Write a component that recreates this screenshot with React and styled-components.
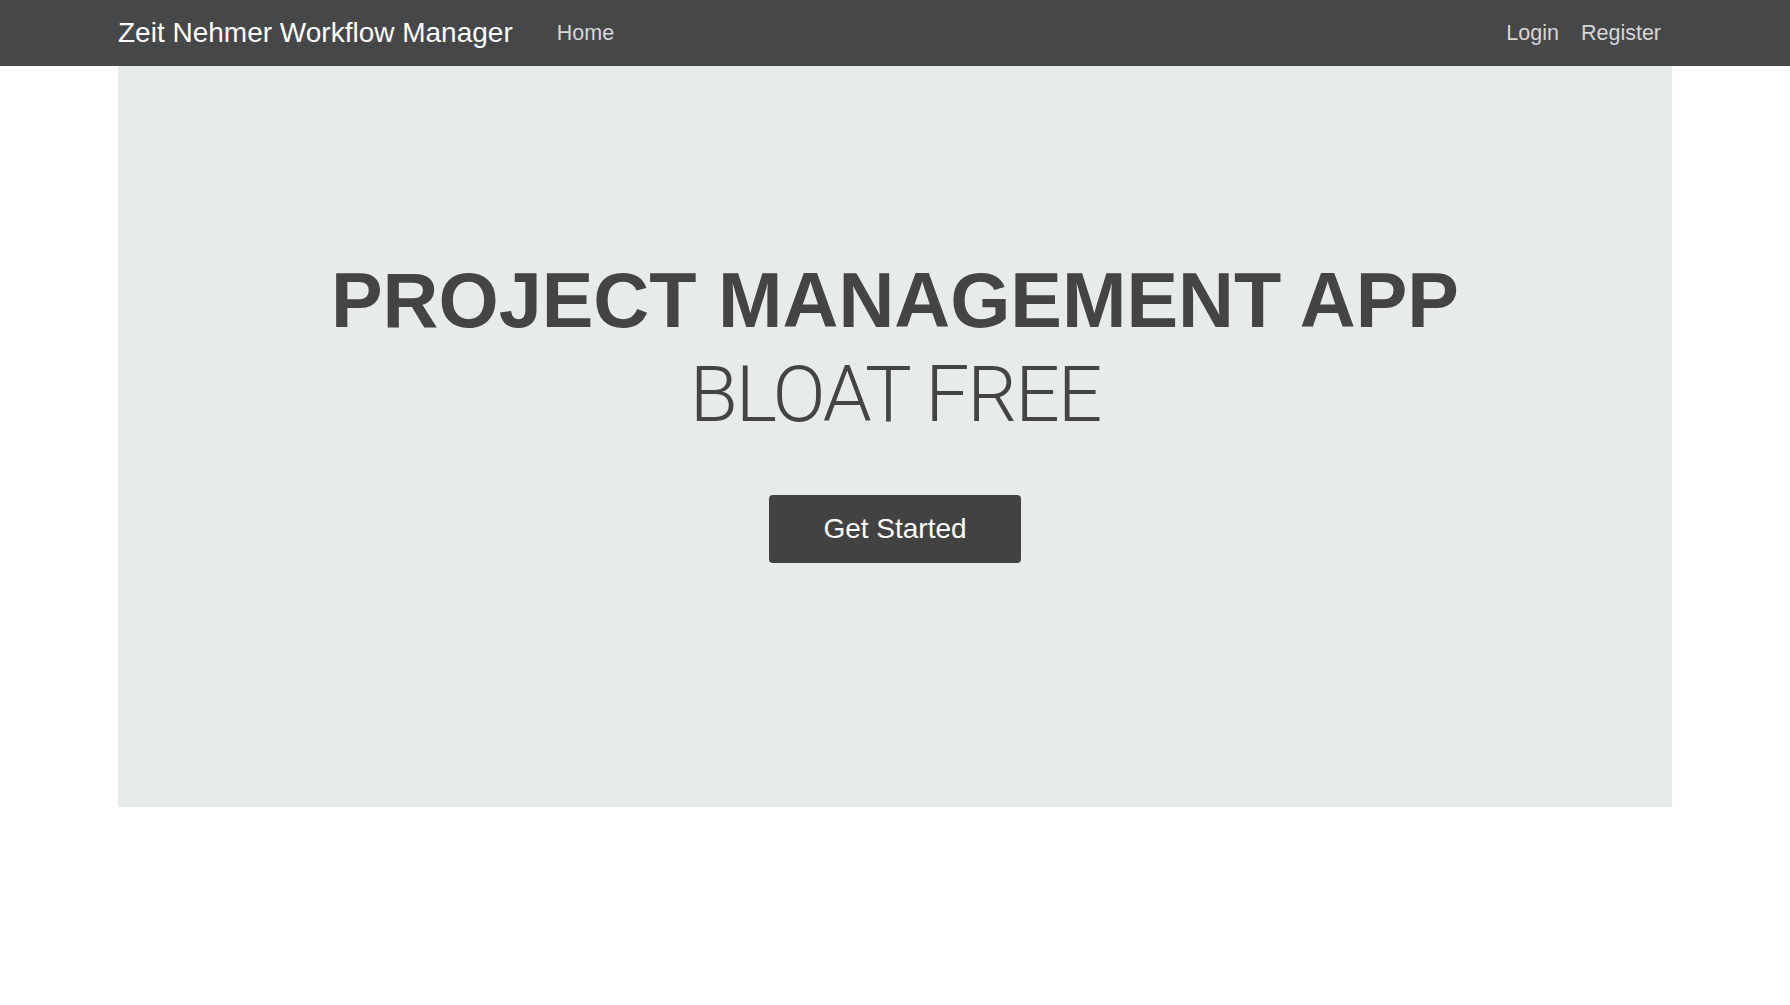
import styled, { createGlobalStyle } from "styled-components";

const GlobalStyle = createGlobalStyle`
  * {
    box-sizing: border-box;
  }
  body {
    margin: 0;
    background: #fff;
    font-family: "Liberation Sans", Arial, sans-serif;
    color: #444;
  }
`;

const Navbar = styled.nav`
  height: 66px;
  background-color: #464749;
  .inner {
    width: 1554px;
    height: 100%;
    margin: 0 auto;
    display: flex;
    align-items: center;
  }
  .brand {
    font-size: 28px;
    color: #fff;
    margin-right: 33px;
    white-space: nowrap;
  }
  .links {
    display: flex;
    align-items: center;
  }
  .links.right {
    margin-left: auto;
  }
`;

const NavLink = styled.a`
  font-size: 21.5px;
  color: rgba(255, 255, 255, 0.78);
  padding: 0 11px;
  text-decoration: none;
  cursor: pointer;
  &:hover {
    color: #fff;
  }
`;

const Jumbotron = styled.section`
  width: 1554px;
  height: 741px;
  margin: 0 auto;
  padding-top: 187px;
  background-color: #e8ebec;
  display: flex;
  flex-direction: column;
  align-items: center;
  h1 {
    margin: 0 0 54px;
    font-size: 77.4px;
    line-height: 94px;
    text-align: center;
    color: #444;
  }
  h1 .title {
    display: block;
    font-weight: bold;
  }
  h1 .sub {
    display: block;
    font-family: Roboto, "Liberation Sans", sans-serif;
    font-size: 78.4px;
    font-weight: 300;
    letter-spacing: -2px;
  }
`;

const Button = styled.button`
  font-family: "Liberation Sans", Arial, sans-serif;
  font-size: 28px;
  line-height: 42px;
  padding: 13px 54px;
  color: #fff;
  background-color: #424242;
  border: none;
  border-radius: 4px;
  cursor: pointer;
  &:hover {
    background-color: #333;
  }
`;

const App = () => {
  return (
    <>
      <GlobalStyle />
      <Navbar>
        <div className="inner">
          <span className="brand">Zeit Nehmer Workflow Manager</span>
          <div className="links">
            <NavLink>Home</NavLink>
          </div>
          <div className="links right">
            <NavLink>Login</NavLink>
            <NavLink>Register</NavLink>
          </div>
        </div>
      </Navbar>
      <Jumbotron>
        <h1>
          <span className="title">PROJECT MANAGEMENT APP</span>
          <span className="sub">BLOAT FREE</span>
        </h1>
        <Button type="button">Get Started</Button>
      </Jumbotron>
    </>
  );
};

export default App;
